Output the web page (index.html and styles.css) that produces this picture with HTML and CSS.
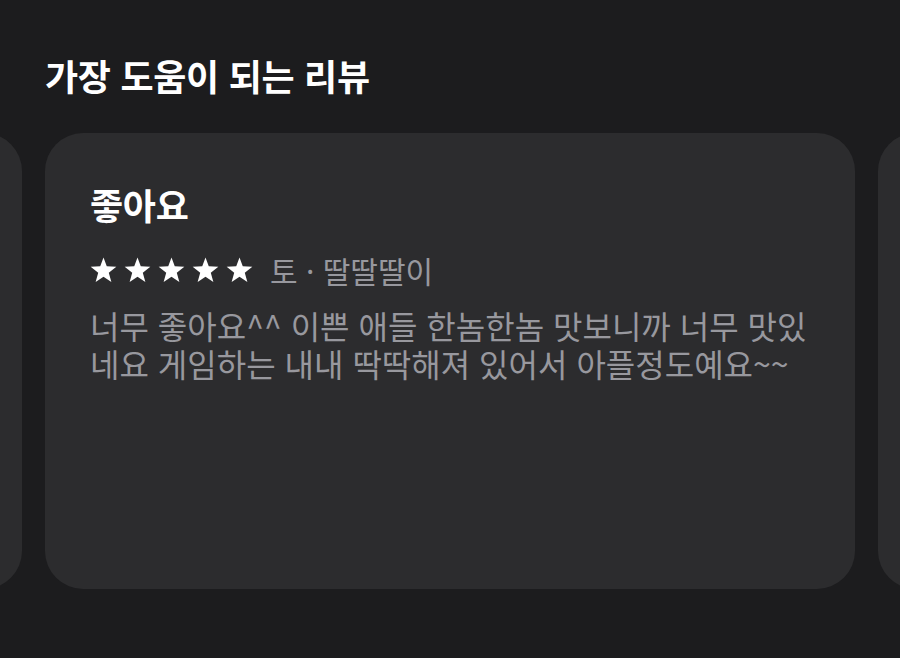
FILE: index.html
```html
<!DOCTYPE html>
<html lang="ko">
<head>
<meta charset="utf-8">
<title>가장 도움이 되는 리뷰</title>
<link rel="stylesheet" href="styles.css">
</head>
<body>
<section class="reviews">
  <h2 class="reviews-title">가장 도움이 되는 리뷰</h2>
  <div class="carousel">
    <div class="track">
      <article class="card"></article>
      <article class="card">
        <h3 class="card-title">좋아요</h3>
        <div class="meta">
          <div class="stars" aria-label="별 5개">
            <svg class="star" viewBox="0 0 24 23"><path d="M12 .3l2.9 7.9 8.5.4-6.7 5.3 2.3 8.2L12 17.4l-7 4.7 2.3-8.2L.6 8.6l8.5-.4z"/></svg>
            <svg class="star" viewBox="0 0 24 23"><path d="M12 .3l2.9 7.9 8.5.4-6.7 5.3 2.3 8.2L12 17.4l-7 4.7 2.3-8.2L.6 8.6l8.5-.4z"/></svg>
            <svg class="star" viewBox="0 0 24 23"><path d="M12 .3l2.9 7.9 8.5.4-6.7 5.3 2.3 8.2L12 17.4l-7 4.7 2.3-8.2L.6 8.6l8.5-.4z"/></svg>
            <svg class="star" viewBox="0 0 24 23"><path d="M12 .3l2.9 7.9 8.5.4-6.7 5.3 2.3 8.2L12 17.4l-7 4.7 2.3-8.2L.6 8.6l8.5-.4z"/></svg>
            <svg class="star" viewBox="0 0 24 23"><path d="M12 .3l2.9 7.9 8.5.4-6.7 5.3 2.3 8.2L12 17.4l-7 4.7 2.3-8.2L.6 8.6l8.5-.4z"/></svg>
          </div>
          <span class="author">토 · 딸딸딸이</span>
        </div>
        <p class="card-body">너무 좋아요^^ 이쁜 애들 한놈한놈 맛보니까 너무 맛있네요 게임하는 내내 딱딱해져 있어서 아플정도예요~~</p>
      </article>
      <article class="card"></article>
    </div>
  </div>
</section>
</body>
</html>
```

FILE: styles.css
```css
* { box-sizing: border-box; }

html, body {
  margin: 0;
  padding: 0;
  background: #1c1c1e;
}

body {
  width: 900px;
  height: 658px;
  overflow: hidden;
  font-family: "Noto Sans CJK KR", "Noto Sans", sans-serif;
  color: #ffffff;
}

.reviews {
  padding-top: 51px;
}

.reviews-title {
  margin: 0 0 0 45px;
  font-size: 36px;
  font-weight: 700;
  line-height: 48px;
  letter-spacing: -0.3px;
}

.carousel {
  margin-top: 34px;
  overflow: hidden;
}

.track {
  display: flex;
  gap: 23px;
  margin-left: -788px;
}

.card {
  flex: 0 0 810px;
  height: 456px;
  background: #2c2c2e;
  border-radius: 38px;
  padding: 49px 45px 0 45px;
}

.card-title {
  margin: 0;
  font-size: 36px;
  font-weight: 700;
  line-height: 44px;
  letter-spacing: -0.3px;
}

.meta {
  display: flex;
  align-items: center;
  gap: 17px;
  margin-top: 26px;
}

.stars {
  display: flex;
  gap: 7px;
}

.star {
  width: 27px;
  height: 26px;
  fill: #ffffff;
}

.author {
  font-size: 30px;
  line-height: 36px;
  color: #98989e;
}

.card-body {
  margin: 18px 0 0 0;
  font-size: 32px;
  line-height: 38px;
  color: #98989e;
}
```
